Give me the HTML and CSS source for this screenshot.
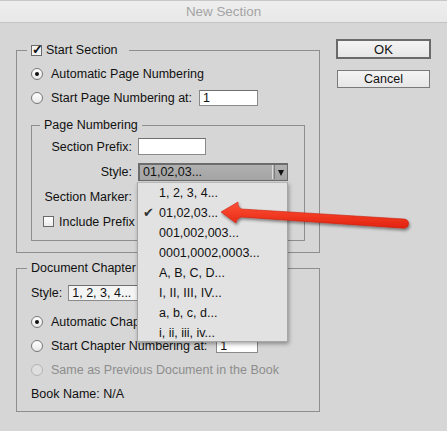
FILE: index.html
```html
<!DOCTYPE html>
<html>
<head>
<meta charset="utf-8">
<link rel="stylesheet" href="styles.css">
</head>
<body>
<div class="window">
  <div class="titlebar">New Section</div>
  <div class="dialog">
    <div class="main">
      <fieldset class="group group-start">
        <legend class="legend legend-outer legend-check"><span class="checkbox checked">&#10003;</span>Start Section</legend>
        <div class="row row-first"><span class="radio on"></span>Automatic Page Numbering</div>
        <div class="row"><span class="radio"></span>Start Page Numbering at:<span class="field field-start">1</span></div>
        <fieldset class="group group-pages">
          <legend class="legend legend-inner">Page Numbering</legend>
          <div class="form-grid">
            <span class="label">Section Prefix:</span><span class="field field-prefix"></span>
            <span class="label">Style:</span><span class="select"><span class="select-value">01,02,03...</span><span class="select-sep"></span><span class="select-arrow"></span></span>
            <span class="label">Section Marker:</span><span class="field field-marker"></span>
          </div>
          <div class="row row-check"><span class="checkbox"></span>Include Prefix</div>
        </fieldset>
      </fieldset>

      <fieldset class="group group-chapter">
        <legend class="legend legend-outer">Document Chapter</legend>
        <div class="row row-style"><span class="label-inline">Style:</span><span class="field field-chstyle">1, 2, 3, 4...</span></div>
        <div class="row row-gap"><span class="radio on"></span>Automatic Chap</div>
        <div class="row"><span class="radio"></span>Start Chapter Numbering at:<span class="field field-chapter">1</span></div>
        <div class="row disabled"><span class="radio"></span>Same as Previous Document in the Book</div>
        <div class="row">Book Name: N/A</div>
      </fieldset>
    </div>

    <div class="buttons">
      <div class="button button-default">OK</div>
      <div class="button">Cancel</div>
    </div>
  </div>

  <ul class="menu">
    <li>1, 2, 3, 4...</li>
    <li class="checked"><span class="check">&#10004;</span>01,02,03...</li>
    <li>001,002,003...</li>
    <li>0001,0002,0003...</li>
    <li>A, B, C, D...</li>
    <li>I, II, III, IV...</li>
    <li>a, b, c, d...</li>
    <li>i, ii, iii, iv...</li>
  </ul>

  <svg class="arrow" width="447" height="431" viewBox="0 0 447 431">
    <defs>
      <linearGradient id="red" x1="0" y1="0" x2="0" y2="1">
        <stop offset="0" stop-color="#ff5236"/>
        <stop offset="1" stop-color="#e2220f"/>
      </linearGradient>
      <filter id="shadow" x="-10%" y="-50%" width="120%" height="200%">
        <feDropShadow dx="1" dy="2" stdDeviation="1.4" flood-color="#000" flood-opacity="0.45"/>
      </filter>
    </defs>
    <path d="M221,212 L238,202 Q237,206 241,209 L404,219 A4.6,4.6 0 0 1 404,228.2 L241,217 Q236,219 236,223 Z" fill="url(#red)" stroke="#c8200f" stroke-width="0.6" filter="url(#shadow)"/>
  </svg>
</div>
</body>
</html>
```

FILE: styles.css
```css
* {
  box-sizing: border-box;
}

html, body {
  margin: 0;
  padding: 0;
}

body {
  font-family: "Liberation Sans", Arial, sans-serif;
  font-size: 12.5px;
  color: #111;
  background: #d6d6d6;
}

.window {
  position: relative;
  width: 447px;
  height: 431px;
  overflow: hidden;
  background: #d6d6d6;
}

.titlebar {
  height: 23px;
  line-height: 22px;
  text-align: center;
  font-size: 13.4px;
  color: #a4a4a4;
  background: linear-gradient(#eeeeee, #e8e8e8);
  border-top: 1px solid #c8c8c8;
  border-bottom: 1px solid #c4c4c4;
}

.dialog {
  display: flex;
  padding: 16px 0 0 16px;
}

.main {
  width: 304px;
  padding-top: 3px;
}

.group {
  margin: 0;
  min-inline-size: 0;
  border: 1px solid #8e8e8e;
}

.group-start {
  width: 304px;
  padding: 0 14px 11px 14px;
}

.group-pages {
  width: 274px;
  margin-top: 7px;
  padding: 0 11px 6px 11px;
}

.group-chapter {
  width: 304px;
  margin-top: 7px;
  padding: 0 14px 5px 14px;
}

.legend {
  display: flex;
  align-items: center;
  height: 16px;
  line-height: 16px;
  white-space: nowrap;
}

.legend-outer {
  padding: 0 4px;
  margin-left: -4px;
}

.legend-check {
  padding-right: 11px;
}

.legend-inner {
  padding: 0 4px;
  margin-left: -3px;
}

.row {
  display: flex;
  align-items: center;
  height: 24px;
  white-space: nowrap;
}

.row-first {
  margin-top: 4px;
}

.row-style {
  margin-top: 5px;
}

.row-gap {
  margin-top: 5px;
}

.row-check {
  height: 25px;
}

.disabled {
  color: #8d8d8d;
}

.disabled .radio {
  border-color: #b4b4b4;
  background: #dedede;
}

.radio {
  width: 12px;
  height: 12px;
  border-radius: 50%;
  border: 1px solid #777;
  background: linear-gradient(#ffffff, #e8e8e8);
  margin-right: 8px;
  display: inline-flex;
  align-items: center;
  justify-content: center;
  flex: none;
}

.radio.on::after {
  content: "";
  width: 4px;
  height: 4px;
  border-radius: 50%;
  background: #111;
}

.checkbox {
  width: 11px;
  height: 11px;
  border: 1px solid #6a6a6a;
  background: linear-gradient(#ffffff, #ececec);
  display: inline-flex;
  align-items: center;
  justify-content: center;
  font-size: 13px;
  line-height: 11px;
  font-weight: bold;
  color: #111;
  margin-right: 4px;
  flex: none;
}

.checkbox.checked {
  background: #f2f2f2;
  padding-bottom: 2px;
  padding-left: 1px;
}

.row-check .checkbox {
  margin-right: 5px;
}

.field {
  display: inline-flex;
  align-items: center;
  height: 16px;
  background: #ffffff;
  border: 1px solid #8a8a8a;
  border-top-color: #6f6f6f;
  padding-left: 3px;
  flex: none;
}

.field-start {
  width: 59px;
  margin-left: 7px;
}

.field-prefix {
  width: 68px;
  height: 17px;
}

.field-marker {
  width: 150px;
  height: 17px;
}

.field-chstyle {
  width: 160px;
  background: #f4f4f4;
}

.field-chapter {
  width: 42px;
  height: 14px;
  margin-left: 9px;
}

.label-inline {
  margin-right: 6px;
}

.form-grid {
  display: grid;
  grid-template-columns: 89px auto;
  grid-auto-rows: 25px;
  column-gap: 6px;
  align-items: center;
  justify-content: start;
  margin-top: 1px;
}

.label {
  text-align: right;
  white-space: nowrap;
}

.select {
  display: flex;
  align-items: center;
  width: 150px;
  height: 18px;
  background: linear-gradient(#b0b0b0, #a4a4a4);
  border: 1px solid #6c6c6c;
  border-width: 2px 1px 1px 2px;
  padding-left: 3px;
}

.select-value {
  flex: 1;
  color: #111;
}

.select-sep {
  width: 3px;
  height: 14px;
  border-left: 1px solid #dcdcdc;
  border-right: 1px solid #7e7e7e;
  margin-right: 3px;
}

.select-arrow {
  width: 0;
  height: 0;
  border-left: 3.5px solid transparent;
  border-right: 3.5px solid transparent;
  border-top: 6px solid #111;
  margin-right: 3px;
  margin-top: 1px;
}

.buttons {
  display: flex;
  flex-direction: column;
  gap: 11px;
  margin-left: 16px;
}

.button {
  width: 93px;
  height: 18px;
  margin-left: 1px;
  display: flex;
  align-items: center;
  justify-content: center;
  background: linear-gradient(#f4f4f4, #e6e6e6);
  border: 1px solid #7a7a7a;
  font-size: 12.5px;
  color: #111;
}

.button-default {
  width: 95px;
  height: 20px;
  margin-left: 0;
  border: 2px solid #6a6a6a;
  font-size: 13px;
}

.menu {
  position: absolute;
  left: 137px;
  top: 182px;
  width: 151px;
  height: 160px;
  margin: 0;
  padding: 0;
  list-style: none;
  background: #e2e2e2;
  border: 1px solid #a6a6a6;
  border-top-color: #b8b8b8;
  box-shadow: 1px 2px 4px rgba(0, 0, 0, 0.35);
}

.menu li {
  position: relative;
  height: 20px;
  line-height: 20px;
  padding-left: 21px;
  white-space: nowrap;
  color: #111;
}

.menu .check {
  position: absolute;
  left: 5px;
  top: 0;
  font-size: 13px;
  color: #333;
}

.arrow {
  position: absolute;
  left: 0;
  top: 0;
  pointer-events: none;
}
```
